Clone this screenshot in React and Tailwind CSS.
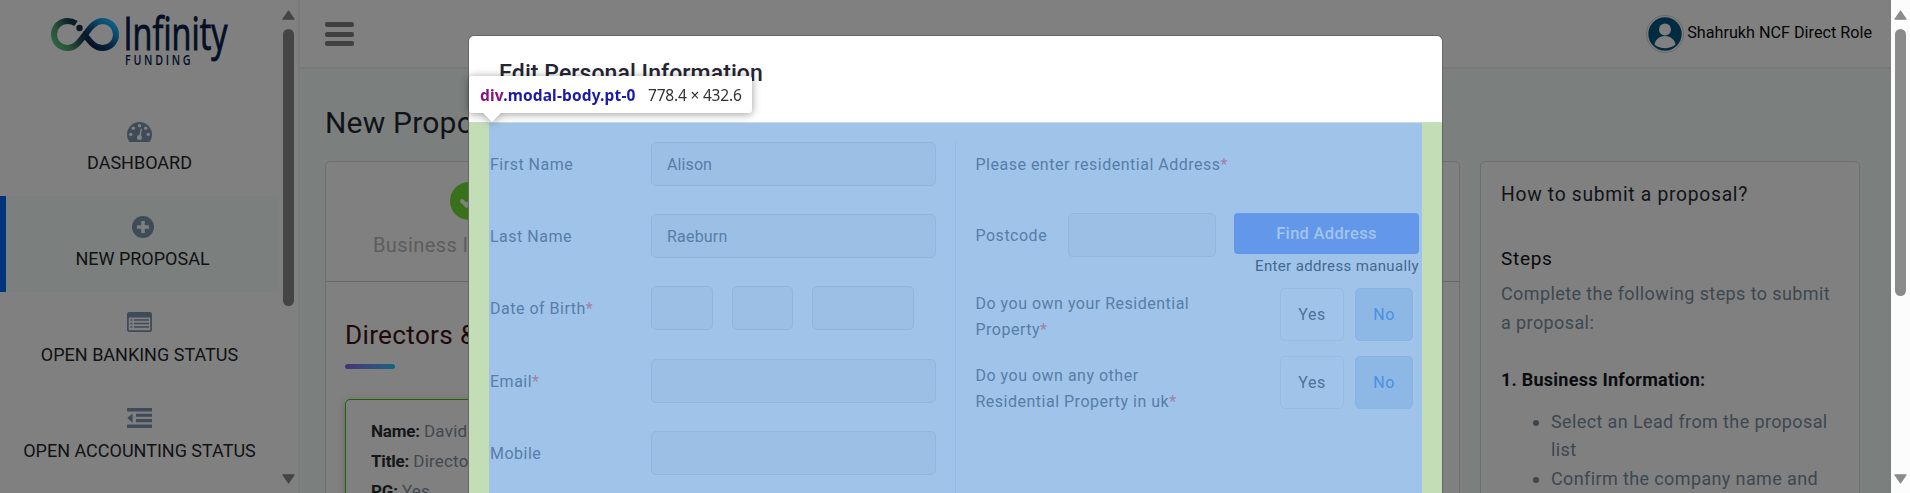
import React from "react";

function Logo() {
  return (
    <svg width="200" height="65" viewBox="40 5 200 65" className="block overflow-visible">
      <defs>
        <linearGradient id="ringLeft" x1="52" y1="48" x2="86" y2="24" gradientUnits="userSpaceOnUse">
          <stop offset="0" stopColor="#2f6a42" />
          <stop offset="0.35" stopColor="#28513a" />
          <stop offset="0.75" stopColor="#0c1c2a" />
          <stop offset="1" stopColor="#07172b" />
        </linearGradient>
        <linearGradient id="ringRight" x1="92" y1="48" x2="112" y2="22" gradientUnits="userSpaceOnUse">
          <stop offset="0" stopColor="#050f22" />
          <stop offset="0.35" stopColor="#07233d" />
          <stop offset="1" stopColor="#0d5f86" />
        </linearGradient>
      </defs>
      <path d="M85 35 C91 43 95 48 102.500 48 C110 48 116 42 116 34.500 C116 27 110 21 102.500 21 C95 21 90 28 85.500 34" fill="none" stroke="url(#ringRight)" strokeWidth="6" />
      <path d="M76 23.500 C73.500 21.800 70.500 21 67.500 21 C60 21 54 27 54 34.500 C54 42 60 48 67.500 48 C76 48 80.500 40.500 86.500 32.500" fill="none" stroke="url(#ringLeft)" strokeWidth="6" />
      <circle cx="79.500" cy="28" r="3.200" fill="#0b1822" />
      <text x="123.500" y="50" fontSize="45" textLength="104" lengthAdjust="spacingAndGlyphs" fill="#040f26" stroke="#040f26" strokeWidth="0.9" fontFamily="'Open Sans', sans-serif">Infinity</text>
      <text transform="translate(125 64.700) scale(0.8 1)" fontSize="13.400" fontWeight="600" textLength="82" lengthAdjust="spacing" fill="#040f26" fontFamily="'Open Sans', sans-serif">FUNDING</text>
    </svg>
  );
}

const DashIcon = () => (
  <svg width="25" height="20" viewBox="0 0 25 20" className="block">
    <path d="M0 12.500a12.500 12.500 0 0 1 25 0c0 2.400-.7 4.700-1.900 6.700-.3.500-.7.800-1.200.8H3.100c-.5 0-.9-.3-1.200-.8A12.500 12.500 0 0 1 0 12.500Z" fill="#3f4b58" />
    <g fill="#808080">
      <circle cx="3.800" cy="12.500" r="1.700" /><circle cx="6.300" cy="6.300" r="1.700" />
      <circle cx="12.500" cy="3.700" r="1.700" /><circle cx="18.700" cy="6.300" r="1.700" />
      <circle cx="21.200" cy="12.500" r="1.700" /><circle cx="12.500" cy="15.500" r="2.500" />
      <path d="M13.800 6.600 15.100 7 13.500 15h-1.700Z" />
    </g>
  </svg>
);
const PlusIcon = () => (
  <svg width="22" height="22" viewBox="0 0 22 22" className="block">
    <circle cx="11" cy="11" r="11" fill="#3f4b58" />
    <path d="M9.200 5h3.600v4.200H17v3.600h-4.200V17H9.200v-4.200H5V9.200h4.200Z" fill="#7b7f7e" />
  </svg>
);
const ListIcon = () => (
  <svg width="25" height="20" viewBox="0 0 25 20" className="block">
    <rect width="25" height="20" rx="2.200" fill="#3f4b58" />
    <path d="M1.800 5.500h21.400v12.200a.6.600 0 0 1-.6.600H2.400a.6.600 0 0 1-.6-.6Z" fill="#808080" />
    <path d="M3.500 7.300h1.800v1.400H3.500zM7 7.300h15v1.400H7zM3.500 10.800h1.800v1.400H3.500zM7 10.800h15v1.400H7zM3.500 14.300h1.800v1.400H3.500zM7 14.300h15v1.400H7z" fill="#3f4b58" />
  </svg>
);
const OutdentIcon = () => (
  <svg width="25" height="20" viewBox="0 0 25 20" className="block">
    <path d="M0 0h25v3.600H0zM9 5.800h16v3H9zM9 11h16v3.200H9zM0 16.400h25V20H0zM5.600 5.400v9.400L.3 10.100Z" fill="#3f4b58" />
  </svg>
);

const NAV = [
  { label: "DASHBOARD", icon: <DashIcon />, pad: "pt-[22px]" },
  { label: "NEW PROPOSAL", icon: <PlusIcon />, active: true, pad: "pt-[20px]" },
  { label: "OPEN BANKING STATUS", icon: <ListIcon />, pad: "pt-[20px]" },
  { label: "OPEN ACCOUNTING STATUS", icon: <OutdentIcon />, pad: "pt-[20px]" },
];

function Arrow({ down, color }) {
  return (
    <svg width="13" height="10" viewBox="0 0 13 10" className="block shrink-0">
      <path d={down ? "M1 .8h11L6.500 9Z" : "M1 9.200h11L6.500 1Z"} fill={color} stroke={color} strokeWidth="1.200" strokeLinejoin="round" />
    </svg>
  );
}

function Sidebar() {
  return (
    <aside className="flex h-full w-[300px] shrink-0 border-r-2 border-[#7a7a7b]">
      <div className="w-[279px] shrink-0">
        <div className="h-[100px] pt-[5px] pl-10"><Logo /></div>
        {NAV.map((n) => (
          <div key={n.label} className={"flex h-24 flex-col items-center " + (n.active ? "border-l-[6px] border-[#00347a] bg-[#7b7f7e]" : "")}>
            <div className={"h-[49px] " + n.pad}>{n.icon}</div>
            <div className="text-[18px] leading-7 whitespace-nowrap text-[#111214]">{n.label}</div>
          </div>
        ))}
      </div>
      <div className="flex w-[19px] flex-col items-center pt-[10px]">
        <Arrow color="#454545" />
        <div className="mt-[9px] h-[277px] w-[11px] rounded-full bg-[#454545]" />
        <div className="mt-[168px]"><Arrow down color="#454545" /></div>
      </div>
    </aside>
  );
}

const Fact = ({ name, value }) => (
  <p><b className="font-bold tracking-[-0.2px] text-[#141618]">{name}:</b> <span className="tracking-[0.2px]">{value}</span></p>
);

function ProposalCard() {
  return (
    <section className="h-[340px] w-[1135px] shrink-0 rounded-t-[5px] border border-[#6e6f70] bg-[#808080]">
      <div className="h-[120px] border-b border-[#666767] pt-5 pl-[47px]">
        <div className="ml-[77px] flex size-[38px] items-center justify-center rounded-full bg-[#38701b]">
          <svg width="18" height="14" viewBox="0 0 18 14"><path d="m2 7 4.500 4.500L16 2" fill="none" stroke="#808080" strokeWidth="4" strokeLinecap="round" /></svg>
        </div>
        <div className="mt-[11px] w-[400px] text-[20px] leading-7 tracking-[0.4px] text-[#5c5d5e]">Business Information</div>
      </div>
      <div className="px-[19px] pt-[33px]">
        <h2 className="text-[26.200px] leading-10 tracking-[0.3px] whitespace-nowrap text-[#1e0a0a]">Directors &amp; Shareholders</h2>
        <div className="mt-[9px] h-[5px] w-[50px] rounded-full bg-linear-to-r from-[#42347a] to-[#0c637e]" />
        <div className="mt-[30px] h-32 w-[500px] rounded-[5px] border border-[#1f6400] pt-[16px] pl-[25px] text-[17px] leading-[30px] text-[#41484f] shadow-[0_2px_8px_rgba(0,0,0,0.2)]">
          <Fact name="Name" value="David" />
          <Fact name="Title" value="Director" />
          <Fact name="PG" value="Yes" />
        </div>
      </div>
    </section>
  );
}

const Bullet = () => <i className="mt-[12px] size-[6px] rounded-full bg-[#3d4750]" />;

function HelpCard() {
  return (
    <section className="h-[340px] w-[380px] shrink-0 rounded-t-[5px] border border-[#6e6f70] bg-[#808080] pt-[17px] pl-5 whitespace-nowrap">
      <h3 className="text-[19.300px] leading-8 tracking-[0.7px] text-[#111318]">How to submit a proposal?</h3>
      <h4 className="mt-[32px] text-[19px] leading-8 tracking-[0.7px] text-[#08090b]">Steps</h4>
      <p className="mt-[4px] text-[18px] leading-[29px] tracking-[0.4px] text-[#3d4750]">Complete the following steps to submit<br />a proposal:</p>
      <h4 className="mt-[28px] text-[18px] leading-[29px] font-bold tracking-[0.25px] text-[#0b0c10]">1. Business Information:</h4>
      <ul className="mt-[14px] list-none pl-[32px] text-[18px] leading-[28.3px] tracking-[0.38px] text-[#3d4750]">
        <li className="flex gap-3"><Bullet /><span>Select an Lead from the proposal<br />list</span></li>
        <li className="flex gap-3"><Bullet /><span>Confirm the company name and</span></li>
      </ul>
    </section>
  );
}

function Header() {
  return (
    <header className="flex h-[69px] items-start justify-between border-b-2 border-[#787879] bg-[#808080] pr-[18px] pl-[25px]">
      <div className="flex flex-col gap-[4.5px] pt-[22px]">
        <span className="h-[5px] w-[29px] rounded-[2px] bg-[#404040]" />
        <span className="h-[5px] w-[29px] rounded-[2px] bg-[#404040]" />
        <span className="h-[5px] w-[29px] rounded-[2px] bg-[#404040]" />
      </div>
      <div className="flex gap-[2px] pt-[15px]">
        <svg width="38" height="38" viewBox="0 0 38 38">
          <circle cx="19" cy="19" r="18.500" fill="#808080" stroke="#6a6a6a" />
          <circle cx="19" cy="19" r="16.700" fill="#022b42" />
          <circle cx="19" cy="14.500" r="6" fill="#808080" />
          <path d="M8.500 29.500c1-5.500 5.500-8.500 10.500-8.500s9.500 3 10.500 8.500c-6 5-15 5-21 0Z" fill="#808080" />
        </svg>
        <span className="pt-[3px] pr-[1px] pl-[1px] text-[16.200px] leading-[30px] text-[#060606]">Shahrukh NCF Direct Role</span>
      </div>
    </header>
  );
}

const Star = () => <span className="text-[#a081a6]">*</span>;
const Field = ({ className = "", children }) => (
  <div className={"h-[44px] rounded-[5px] border border-[#92b5dd] bg-[#9cbfe5] px-[15px] leading-[43px] " + className}>{children}</div>
);
const Row = ({ label, star, children }) => (
  <div className="flex h-[72.2px] items-start">
    <label className="w-[161px] shrink-0 leading-[45.6px]">{label}{star && <Star />}</label>
    {children}
  </div>
);
const Question = ({ a, b, className, textClass }) => (
  <div className={"flex h-[54px] justify-between pr-[6px] " + className}>
    <div className={"leading-[26px] tracking-[0.5px] " + textClass}>{a}<br />{b}<Star /></div>
    <div className="flex gap-[11px] leading-[51px] tracking-[0.5px]">
      <div className="h-[53px] w-16 rounded-[5px] border border-[#96bae2] text-center text-[#4e7299]">Yes</div>
      <div className="h-[53px] w-[58px] rounded-[5px] border border-[#8ab3df] bg-[#8db7e4] text-center text-[#4a90e2]">No</div>
    </div>
  </div>
);

function Modal() {
  return (
    <div className="absolute top-9 left-[469px] flex h-[457px] w-[973px] flex-col overflow-hidden rounded-t-[5px] bg-white shadow-[0_0_0_1px_#666]">
      <h2 className="h-[86px] shrink-0 pt-[20px] pl-[30px] text-[23px] leading-9 font-medium tracking-[0.07px] text-[#262533]">Edit Personal Information</h2>
      <div className="flex-1 border-x-[20px] border-t border-x-[#c3deb7] border-t-[#c9dcd8] bg-[#a0c4e9]">
        <div className="flex h-full pt-[19px] text-[16px] text-[#577da8]">
          <div className="h-full w-[467px] shrink-0 border-r border-[#98bbe3] pl-[1px] tracking-[0.5px]">
            <Row label="First Name"><Field className="w-[285px] tracking-[0.1px]">Alison</Field></Row>
            <Row label="Last Name"><Field className="w-[285px] tracking-[0.2px]">Raeburn</Field></Row>
            <Row label="Date of Birth" star>
              <div className="flex gap-[19px]"><Field className="w-[62px]" /><Field className="w-[61px]" /><Field className="w-[102px]" /></div>
            </Row>
            <Row label="Email" star><Field className="w-[285px]" /></Row>
            <Row label="Mobile"><Field className="w-[285px]" /></Row>
          </div>
          <div className="w-[463px] pl-[19.5px] tracking-[0.5px]">
            <div className="h-[71px] leading-[46px]">Please enter residential Address<Star /></div>
            <div className="flex h-[44px] items-start">
              <label className="w-[92.5px] leading-[46px]">Postcode</label>
              <Field className="w-[148px]" />
              <button className="ml-[18px] h-[41px] w-[185px] rounded-[4px] bg-[#6297e9] text-[16.500px] leading-[41px] font-medium tracking-[0.3px] text-[#a3c4ee]">Find Address</button>
            </div>
            <div className="-mt-[1px] text-right text-[15px] leading-5 tracking-[0.36px] text-[#44688f]">Enter address manually</div>
            <Question className="mt-[12px]" textClass="pt-[3px]" a="Do you own your Residential" b="Property" />
            <Question className="mt-[14px]" textClass="pt-[7px]" a="Do you own any other" b="Residential Property in uk" />
          </div>
        </div>
      </div>
    </div>
  );
}

function Tooltip() {
  return (
    <div className="absolute top-[76px] left-[469px] drop-shadow-[0_1px_4px_rgba(0,0,0,0.4)]">
      <div className="flex h-[37px] w-[283px] rounded-[3px] bg-white pl-[11px] font-['Noto_Sans',sans-serif] text-[15.500px] leading-[39px] whitespace-nowrap">
        <b className="w-[168px] font-bold tracking-[0.15px] text-[#1a1aa6]"><span className="text-[#881280]">div</span>.modal-body.pt-0</b>
        <span className="tracking-[-0.2px] text-[#303236]">778.4 × 432.6</span>
      </div>
      <svg width="18" height="9" viewBox="0 0 18 9" className="ml-[14px] block"><path d="M0 0h18L9 9Z" fill="#fff" /></svg>
    </div>
  );
}

export default function App() {
  return (
    <div className="relative flex h-[493px] w-[1910px] overflow-hidden bg-[#808080] font-[Roboto,sans-serif]">
      <Sidebar />
      <main className="h-full w-[1591px] shrink-0 bg-[#7b7f7e]">
        <Header />
        <div className="pt-[33px] pl-[25px]">
          <h1 className="h-[59px] text-[30px] leading-[42px] tracking-[0.2px] text-[#111318]">New Proposal</h1>
          <div className="flex gap-5"><ProposalCard /><HelpCard /></div>
        </div>
      </main>
      <div className="flex w-[19px] shrink-0 flex-col items-center bg-[#fcfcfc] pt-[10px]">
        <Arrow color="#8b8b8b" />
        <div className="mt-[9px] h-[267px] w-[11px] shrink-0 rounded-full bg-[#8b8b8b]" />
        <div className="mt-[178px]"><Arrow down color="#8b8b8b" /></div>
      </div>
      <Modal />
      <Tooltip />
    </div>
  );
}
